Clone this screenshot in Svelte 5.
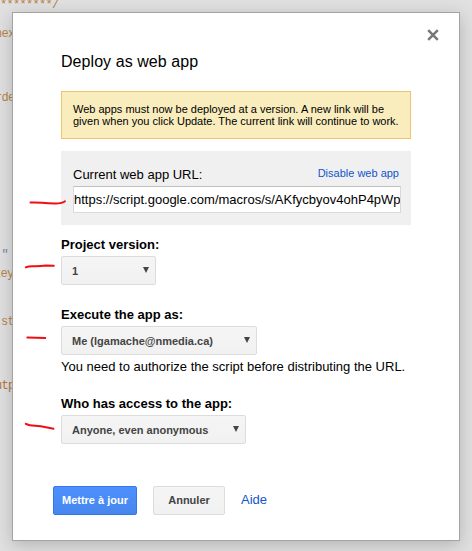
<script>
  const code = [
    { y: -2, x: 0, text: '********/', color: '#b97d45' },
    { y: 27, x: -5, text: 'nex', color: '#b5854d' },
    { y: 91, x: -5, text: 'rde', color: '#b5854d' },
    { y: 248, x: -5, text: '."', color: '#6f83b8' },
    { y: 267, x: -6, text: 'key', color: '#b5854d' },
    { y: 315, x: 1, text: 'st', color: '#b5854d' },
    { y: 379, x: -5, text: 'utp', color: '#b5753d' }
  ];
  const url = 'https://script.google.com/macros/s/AKfycbyov4ohP4pWp';
</script>

<main>
  <div class="code">
    {#each code as c}
      <span style="left:{c.x}px;top:{c.y}px;color:{c.color}">{c.text}</span>
    {/each}
  </div>

  <section class="dialog">
    <svg class="close" viewBox="0 0 12 12"><path d="M1.2 1.2 10.8 10.8M10.8 1.2 1.2 10.8" stroke="#777" stroke-width="2.5" fill="none" /></svg>
    <h1>Deploy as web app</h1>
    <div class="notice">Web apps must now be deployed at a version. A new link will be<br />given when you click Update. The current link will continue to work.</div>
    <div class="current">
      <div class="row">
        <span class="label">Current web app URL:</span>
        <a class="disable">Disable web app</a>
      </div>
      <div class="field">{url}</div>
    </div>

    <h2 class="h-version">Project version:</h2>
    <div class="select version"><span>1</span><i></i></div>
    <h2 class="h-execute">Execute the app as:</h2>
    <div class="select execute"><span>Me (lgamache@nmedia.ca)</span><i></i></div>
    <p>You need to authorize the script before distributing the URL.</p>
    <h2 class="h-access">Who has access to the app:</h2>
    <div class="select access"><span>Anyone, even anonymous</span><i></i></div>

    <footer>
      <div class="btn primary">Mettre à jour</div>
      <div class="btn cancel">Annuler</div>
      <a class="help">Aide</a>
    </footer>
  </section>

  <svg class="marks" viewBox="0 0 472 551">
    <path d="M30.5 202.5 Q36 202.3 42 202.7 T55 203.5 Q62 203.6 65 201.3" />
    <path d="M25.8 267.3 Q28 266.2 34 266.3 T46 265.6 L53.8 265.8" />
    <path d="M27.3 337.6 L45.2 337.9" />
    <path d="M25.8 423.8 Q29 425.6 35 425.7 T46 427.3 L53.5 428.8" />
  </svg>
</main>

<style>
  :global(body) { margin: 0; }
  main {
    position: relative;
    box-sizing: border-box;
    width: 472px;
    height: 551px;
    padding: 12px;
    overflow: hidden;
    background: #e0e0e0;
    font-family: "Liberation Sans", Arial, sans-serif;
    color: #000;
  }
  .code span {
    position: absolute;
    font: 12px/15px "Liberation Mono", monospace;
    letter-spacing: -0.7px;
    white-space: pre;
  }
  .dialog {
    position: relative;
    box-sizing: border-box;
    width: 448px;
    height: 529px;
    padding: 0 48px;
    border: 1px solid #a3a3a3;
    background: #fff;
    box-shadow: 0 4px 16px rgba(0, 0, 0, 0.2);
    display: flex;
    flex-direction: column;
    align-items: flex-start;
  }
  .close {
    position: absolute;
    left: 414px;
    top: 16px;
    width: 12px;
    height: 12px;
  }
  h1 {
    margin: 38px 0 0;
    font-size: 16px;
    line-height: 22px;
    font-weight: normal;
    letter-spacing: 0.06px;
  }
  .notice {
    box-sizing: border-box;
    width: 350px;
    height: 48px;
    margin-top: 18px;
    padding: 11px;
    border: 1px solid #f0c36d;
    background: #f9edbe;
    font-size: 11px;
    line-height: 12px;
    white-space: nowrap;
  }
  .current {
    box-sizing: border-box;
    width: 350px;
    height: 74px;
    margin-top: 12px;
    padding: 14px 10px 0 12px;
    background: #f0f0f0;
  }
  .row {
    display: flex;
    justify-content: space-between;
    height: 21px;
    padding-right: 2px;
  }
  .label { font-size: 13px; line-height: 20px; }
  .disable { font-size: 11px; line-height: 16px; color: #15c; }
  .field {
    box-sizing: border-box;
    width: 328px;
    height: 27px;
    border: 1px solid #d9d9d9;
    border-top-color: #c0c0c0;
    background: #fff;
    font-size: 13px;
    line-height: 26px;
    white-space: nowrap;
    overflow: hidden;
  }
  h2 {
    margin: 0;
    font-size: 13px;
    line-height: 18px;
    font-weight: bold;
    white-space: nowrap;
  }
  .h-version { margin-top: 11px; }
  .h-execute { margin-top: 21px; }
  .select, .btn {
    box-sizing: border-box;
    height: 29px;
    border: 1px solid #dcdcdc;
    border-radius: 2px;
    background: linear-gradient(#f5f5f5, #f1f1f1);
    color: #444;
    font-size: 11px;
    line-height: 29px;
    font-weight: bold;
    white-space: nowrap;
  }
  .select {
    display: flex;
    justify-content: space-between;
    margin-top: 2px;
    padding: 0 6px 0 10px;
  }
  .select i {
    width: 0;
    height: 0;
    margin-top: 10px;
    border: 3px solid transparent;
    border-top: 6px solid #444;
    border-bottom: 0;
  }
  .version { width: 95px; }
  .execute { width: 196px; }
  .access { width: 185px; }
  p {
    margin: 3px 0 0;
    font-size: 13px;
    line-height: 18px;
    white-space: nowrap;
  }
  .h-access { margin-top: 19px; }
  footer {
    display: flex;
    margin: 42px 0 0 -8px;
  }
  .btn { text-align: center; line-height: 27px; }
  .primary {
    width: 84px;
    margin-right: 16px;
    border-color: #3079ed;
    background: linear-gradient(#4d90fe, #4787ed);
    color: #fff;
  }
  .cancel { width: 72px; margin-right: 16px; }
  .help { font-size: 13px; line-height: 27px; color: #15c; }
  .marks {
    position: absolute;
    left: 0;
    top: 0;
    width: 472px;
    height: 551px;
    fill: none;
    stroke: #f20d14;
    stroke-width: 2;
    stroke-linecap: round;
    pointer-events: none;
  }
</style>
